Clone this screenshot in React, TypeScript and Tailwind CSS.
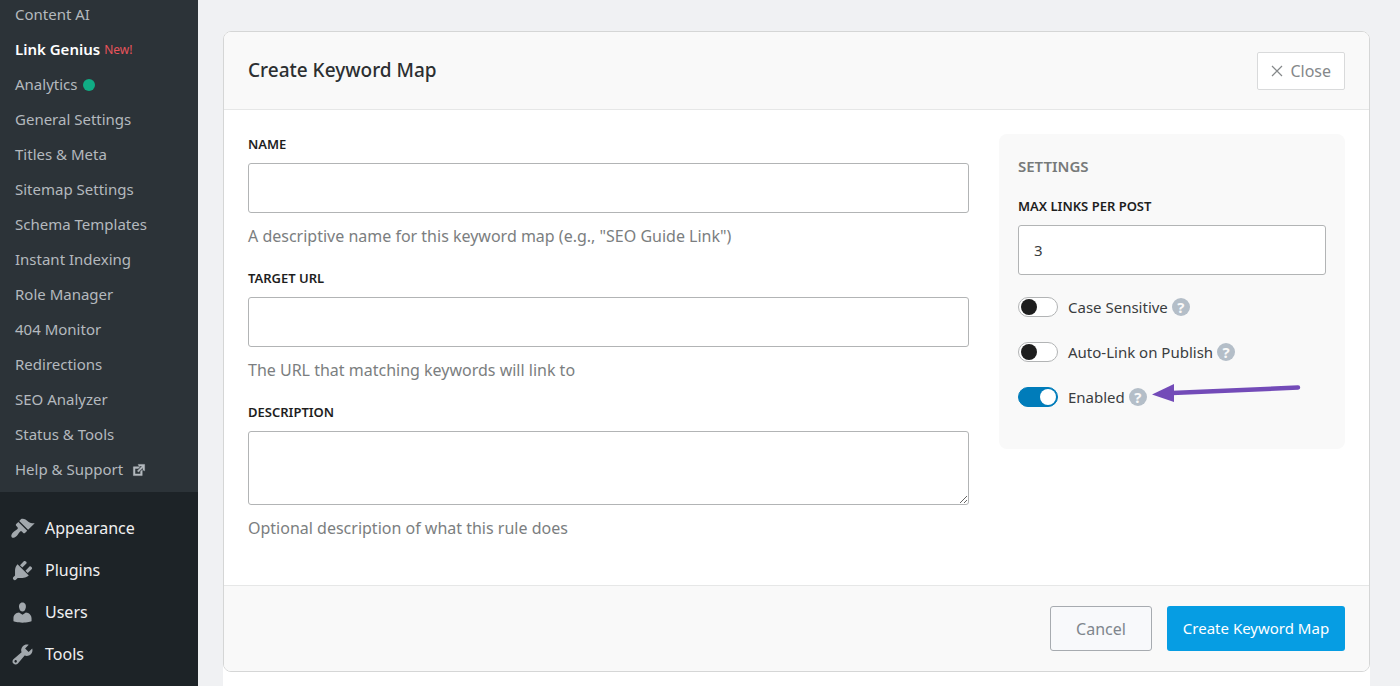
import React, { useState } from "react";

const submenu = [
  "Content AI",
  "Link Genius",
  "Analytics",
  "General Settings",
  "Titles & Meta",
  "Sitemap Settings",
  "Schema Templates",
  "Instant Indexing",
  "Role Manager",
  "404 Monitor",
  "Redirections",
  "SEO Analyzer",
  "Status & Tools",
  "Help & Support",
];

const menu = [
  {
    label: "Appearance",
    path: "M14.48 11.06L7.41 3.99l1.5-1.5c.5-.56 2.3-.47 3.51.32 1.21.8 1.43 1.28 2.91 2.1 1.18.64 2.45 1.26 4.45.85zm-.71.71L6.7 4.7 4.93 6.47c-.39.39-.39 1.02 0 1.41l1.06 1.06c.39.39.39 1.03 0 1.42-.6.6-1.43 1.11-2.21 1.69-.35.26-.7.53-1.01.84C1.43 14.23.4 16.08 1.4 17.07c.99 1 2.84-.03 4.18-1.36.31-.31.58-.66.85-1.02.57-.78 1.08-1.61 1.69-2.21.39-.39 1.02-.39 1.41 0l1.06 1.06c.39.39 1.02.39 1.41 0z",
  },
  {
    label: "Plugins",
    path: "M13.11 4.36L9.87 7.6 8 5.73l3.24-3.24c.35-.34 1.05-.2 1.56.32.52.51.66 1.21.31 1.55zm-8 1.77l.91-1.12 9.01 9.01-1.19.84c-.71.71-2.63 1.16-3.82 1.16H6.14L4.9 17.26c-.59.59-1.54.59-2.12 0-.59-.58-.59-1.53 0-2.12l1.24-1.24v-3.88c0-1.13.4-3.19 1.09-3.89zm7.26 3.97l3.24-3.24c.34-.35 1.04-.21 1.55.31.52.51.66 1.21.31 1.55l-3.24 3.25z",
  },
  {
    label: "Users",
    path: "M10 9.25c-2.27 0-2.73-3.44-2.73-3.44C7 4.02 7.82 2 9.97 2c2.16 0 2.98 2.02 2.71 3.81 0 0-.41 3.44-2.68 3.44zm0 2.57L12.72 10c2.39 0 4.52 2.33 4.52 4.53v2.49s-3.65 1.13-7.24 1.13c-3.65 0-7.24-1.13-7.24-1.13v-2.49c0-2.25 1.94-4.48 4.47-4.48z",
  },
  {
    label: "Tools",
    path: "M16.68 9.77c-1.34 1.34-3.3 1.67-4.95.99l-5.41 6.52c-.99.99-2.59.99-3.58 0s-.99-2.59 0-3.57l6.52-5.42c-.68-1.65-.35-3.61.99-4.95 1.28-1.28 3.12-1.62 4.72-1.06l-2.89 2.89 2.82 2.82 2.86-2.87c.53 1.58.18 3.39-1.08 4.65zM3.81 16.21c.4.39 1.04.39 1.43 0 .4-.4.4-1.04 0-1.43-.39-.4-1.03-.4-1.43 0-.39.39-.39 1.03 0 1.43z",
  },
];

function Sidebar() {
  return (
    <nav className="w-[198px] shrink-0 bg-[#1d2327]">
      <ul className="-mt-[3px] bg-[#2c3338] pb-[5px] text-[15px] text-[#b4b9be]">
        {submenu.map((label) => (
          <li key={label}>
            <a href="#" className="flex h-[35px] items-center pl-[15px]">
              {label === "Link Genius" ? (
                <span className="font-semibold text-white">{label}</span>
              ) : (
                label
              )}
              {label === "Link Genius" && (
                <span className="ml-1 text-xs text-[#e8545b]">New!</span>
              )}
              {label === "Analytics" && (
                <span className="ml-1.5 size-3 rounded-full bg-[#10ac84]" />
              )}
              {label === "Help & Support" && (
                <svg
                  viewBox="0 0 20 20"
                  className="ml-2 size-4"
                  fill="currentColor"
                  stroke="currentColor"
                  strokeWidth="0.6"
                >
                  <path d="M9 3h8v8l-2-1V6.92l-5.6 5.59-1.41-1.41L14.08 5H10zm3 12v-3l2-2v7H3V6h8L9 8H5v7h7z" />
                </svg>
              )}
            </a>
          </li>
        ))}
      </ul>
      <ul className="pt-[15px] text-base text-[#f0f0f1]">
        {menu.map((item) => (
          <li key={item.label}>
            <a href="#" className="flex h-[42px] items-center gap-2.5 pl-2.5">
              <svg viewBox="0 0 20 20" className="size-[25px] fill-[#a2a8ad]">
                <path d={item.path} />
              </svg>
              {item.label}
            </a>
          </li>
        ))}
      </ul>
    </nav>
  );
}

type FieldProps = {
  id: string;
  label: string;
  help: string;
  multiline?: boolean;
};

function Field({ id, label, help, multiline }: FieldProps) {
  return (
    <div>
      <label
        htmlFor={id}
        className="block text-[13px] leading-5 font-semibold text-[#1e1e1e] uppercase"
      >
        {label}
      </label>
      {multiline ? (
        <textarea
          id={id}
          className="mt-[9px] block h-[74px] w-full rounded-[3px] border border-[#b2b4b5] bg-white px-4 py-2"
        />
      ) : (
        <input
          id={id}
          type="text"
          className="mt-[9px] block h-[50px] w-full rounded-[3px] border border-[#b2b4b5] bg-white px-4"
        />
      )}
      <p className="mt-[11px] text-base leading-6 text-[#7b7e80]">{help}</p>
    </div>
  );
}

type ToggleProps = {
  id: string;
  label: string;
  initial?: boolean;
  children?: React.ReactNode;
};

function Toggle({ id, label, initial = false, children }: ToggleProps) {
  const [on, setOn] = useState(initial);
  return (
    <div className="relative flex h-6 items-center">
      <input
        id={id}
        type="checkbox"
        role="switch"
        checked={on}
        onChange={() => setOn(!on)}
        className="h-5 w-10 appearance-none rounded-full border border-[#b2b4b5] bg-white px-0.5 py-px before:block before:size-4 before:rounded-full before:bg-[#1e1e1e] checked:border-[#007cba] checked:bg-[#007cba] checked:pl-[21px] checked:before:bg-white"
      />
      <label htmlFor={id} className="ml-2.5 text-[15px] text-[#3a3d40]">
        {label}
      </label>
      <span className="ml-1 flex size-[18px] items-center justify-center rounded-full bg-[#b4bec8] text-[15px] font-bold text-[#f9f9f9]">
        ?
      </span>
      {children}
    </div>
  );
}

function Settings() {
  return (
    <aside className="w-[346px] shrink-0 self-start rounded-lg bg-[#f9f9f9] px-[19px] pt-5 pb-10">
      <h3 className="text-[15px] leading-6 font-semibold text-[#777a7a] uppercase">
        Settings
      </h3>
      <label
        htmlFor="max-links"
        className="mt-[18px] block text-[13px] leading-5 font-semibold text-[#1e1e1e] uppercase"
      >
        Max links per post
      </label>
      <input
        id="max-links"
        type="text"
        inputMode="numeric"
        defaultValue="3"
        className="mt-[9px] block h-[50px] w-full rounded-[3px] border border-[#b2b4b5] bg-white px-[15px] text-[15px] text-[#3a3d40]"
      />
      <div className="mt-5 flex flex-col gap-[21px]">
        <Toggle id="case-sensitive" label="Case Sensitive" />
        <Toggle id="auto-link" label="Auto-Link on Publish" />
        <Toggle id="enabled" label="Enabled" initial>
          <svg
            viewBox="0 0 150 24"
            className="absolute -top-1 left-[134px] h-6 w-[150px]"
          >
            <path
              d="M20 12L146 6.5"
              stroke="#734bb8"
              strokeWidth="4.5"
              strokeLinecap="round"
            />
            <path d="M0 13.5L22 3v18z" fill="#734bb8" />
          </svg>
        </Toggle>
      </div>
    </aside>
  );
}

export default function App() {
  return (
    <div className="flex min-h-screen overflow-hidden bg-[#f0f1f3] font-['Noto_Sans','Open_Sans',sans-serif]">
      <Sidebar />
      <main className="flex flex-1 flex-col pt-[31px] pr-[30px] pl-[25px]">
        <div className="flex-1 rounded-t-lg bg-white">
          <form
            className="overflow-hidden rounded-lg border border-[#d5d6d6] bg-white"
            onSubmit={(e) => e.preventDefault()}
          >
            <header className="flex h-[78px] items-center justify-between border-b border-[#e6e7e7] bg-[#f9f9f9] px-6">
              <h2 className="text-[19px] font-medium text-[#2c2f31]">
                Create Keyword Map
              </h2>
              <button
                type="button"
                className="flex h-[38px] items-center gap-[7px] rounded-xs border border-[#d9dadb] bg-white px-[13px] text-base text-[#85888a]"
              >
                <svg
                  viewBox="0 0 12 12"
                  className="size-3"
                  stroke="currentColor"
                  strokeWidth="1.2"
                >
                  <path d="M1 1l10 10M11 1L1 11" />
                </svg>
                Close
              </button>
            </header>
            <div className="flex gap-[30px] px-6 pt-6 pb-[45px]">
              <div className="flex flex-1 flex-col gap-5">
                <Field
                  id="name"
                  label="Name"
                  help={'A descriptive name for this keyword map (e.g., "SEO Guide Link")'}
                />
                <Field
                  id="target-url"
                  label="Target URL"
                  help="The URL that matching keywords will link to"
                />
                <Field
                  id="description"
                  label="Description"
                  help="Optional description of what this rule does"
                  multiline
                />
              </div>
              <Settings />
            </div>
            <footer className="flex h-[86px] items-center justify-end gap-[15px] border-t border-[#e6e7e7] bg-[#f9f9f9] px-6">
              <button
                type="button"
                className="h-[45px] w-[102px] rounded-[3px] border border-[#a7abb0] bg-[#f8f9fb] text-base text-[#7f868d]"
              >
                Cancel
              </button>
              <button
                type="submit"
                className="h-[45px] w-[178px] rounded-[3px] bg-[#069de3] text-[15px] text-white"
              >
                Create Keyword Map
              </button>
            </footer>
          </form>
        </div>
      </main>
    </div>
  );
}
